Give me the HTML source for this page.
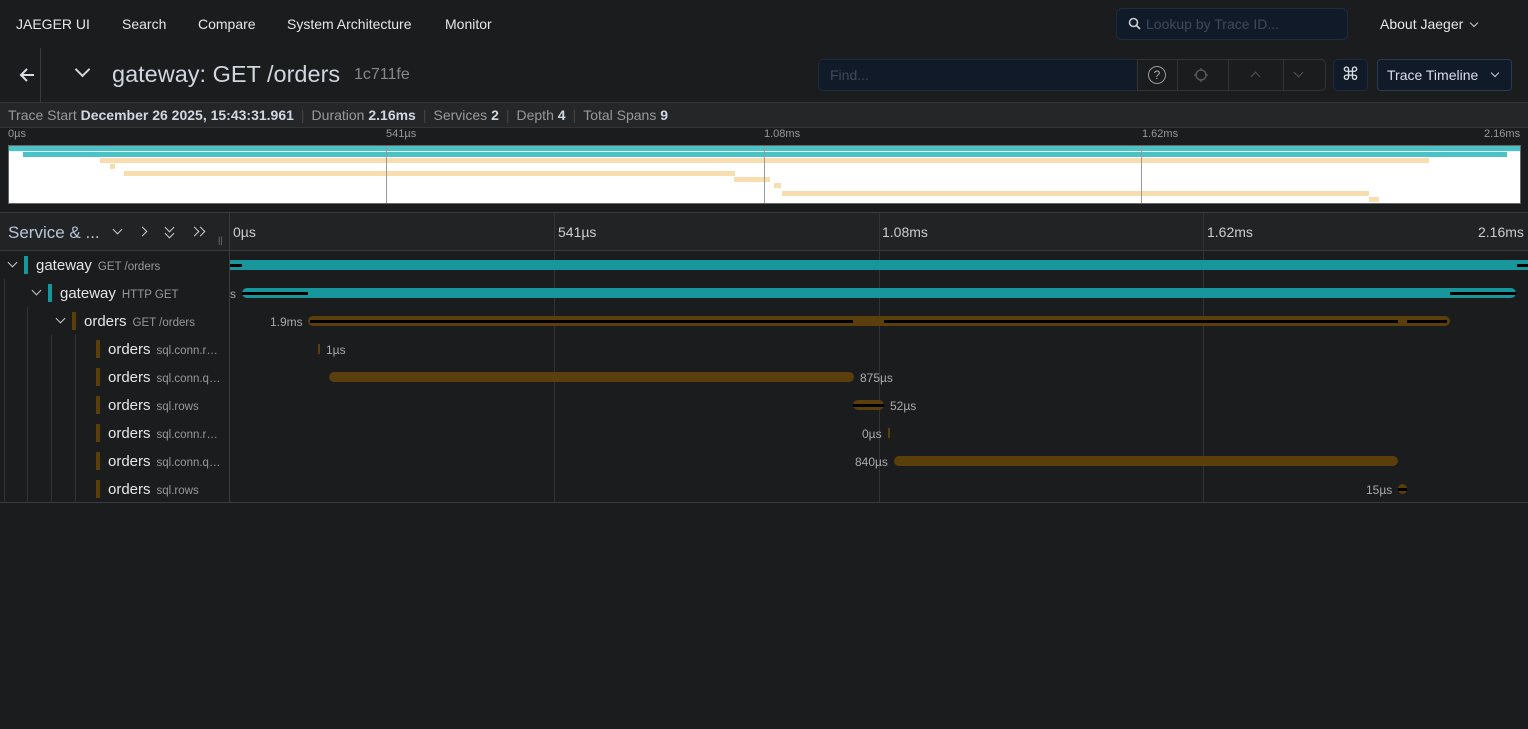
<!DOCTYPE html>
<html><head><meta charset="utf-8"><style>
*{box-sizing:border-box;margin:0;padding:0}
body{width:1528px;height:729px;background:#1b1c1e;font-family:"Liberation Sans",sans-serif;color:#d8dde3;position:relative;overflow:hidden}
.a{position:absolute;white-space:nowrap}
.nav{font-size:14px;top:16px;color:#e6e6e6}
.vl{position:absolute;width:1px;background:#3a3b3e}
.bar{position:absolute;height:10px}
.t{background:#17969c}.b{background:#5a3e0b}
.blk{position:absolute;height:3px;background:#000}
.lab{position:absolute;font-size:11px;color:#aaa}
.row .n{font-size:15px;color:#e4e6ea}
.row .o{font-size:11.5px;color:#999;margin-left:6px}
.cb{position:absolute;width:4px;height:18px}
.chev{position:absolute;width:7px;height:7px;border-right:1.6px solid #ccc;border-bottom:1.6px solid #ccc;transform:rotate(45deg)}
.mm{position:absolute}
.sep{color:#444;margin:0 7px}
</style></head><body>
<!-- nav -->
<div class="a nav" style="left:16px">JAEGER UI</div>
<div class="a nav" style="left:122px">Search</div>
<div class="a nav" style="left:198px">Compare</div>
<div class="a nav" style="left:287px">System Architecture</div>
<div class="a nav" style="left:445px">Monitor</div>
<div class="a" style="left:1116px;top:8px;width:232px;height:32px;background:#111a28;border:1px solid #1f2c3f;border-radius:6px"></div>
<svg class="a" style="left:1128px;top:17px" width="13" height="13" viewBox="0 0 13 13"><circle cx="5.5" cy="5.5" r="4" fill="none" stroke="#ccc" stroke-width="1.6"/><path d="M8.5 8.5L12 12" stroke="#ccc" stroke-width="1.8"/></svg>
<div class="a" style="left:1146px;top:16px;font-size:14px;color:#3d4a5c">Lookup by Trace ID...</div>
<div class="a nav" style="left:1380px">About Jaeger</div>
<div class="chev" style="left:1471px;top:20px;width:6px;height:6px"></div>
<!-- trace header -->
<svg class="a" style="left:18px;top:66px" width="18" height="18" viewBox="0 0 18 18"><path d="M16 9H3M9 3L3 9l6 6" fill="none" stroke="#d8dde3" stroke-width="2"/></svg>
<div class="vl" style="left:40px;top:48px;height:54px"></div>
<div class="chev" style="left:77px;top:64px;width:11px;height:11px;border-width:2.4px;border-color:#cfd6df"></div>
<div class="a" style="left:112px;top:61px;font-size:23.5px;color:#cfd6df">gateway: GET /orders</div>
<div class="a" style="left:354px;top:66px;font-size:16px;color:#888">1c711fe</div>
<div class="a" style="left:818px;top:59px;width:508px;height:32px;background:#111a28;border:1px solid #1f2c3f;border-radius:5px"></div>
<div class="a" style="left:830px;top:67px;font-size:14px;color:#3d4a5c">Find...</div>
<div class="a" style="left:1137px;top:59px;width:189px;height:32px;background:#1b1c1e;border:1px solid #333;border-radius:0 5px 5px 0"></div>
<div class="vl" style="left:1177px;top:59px;height:32px;background:#333"></div>
<div class="vl" style="left:1228px;top:59px;height:32px;background:#333"></div>
<div class="vl" style="left:1283px;top:59px;height:32px;background:#333"></div>
<div class="a" style="left:1148px;top:66px;width:18px;height:18px;border:1px solid #999;border-radius:50%;font-size:12px;color:#aaa;text-align:center;line-height:16px">?</div>
<svg class="a" style="left:1193px;top:67px" width="16" height="16" viewBox="0 0 16 16"><circle cx="8" cy="8" r="5" fill="none" stroke="#555" stroke-width="1.5"/><path d="M8 1v3M8 12v3M1 8h3M12 8h3" stroke="#555" stroke-width="1.5"/></svg>
<div class="chev" style="left:1252px;top:73px;transform:rotate(225deg);border-color:#555"></div>
<div class="chev" style="left:1295px;top:69px;border-color:#555"></div>
<div class="a" style="left:1333px;top:59px;width:35px;height:32px;background:#111a28;border:1px solid #1f2c3f;border-radius:5px;text-align:center;font-size:18px;line-height:29px;color:#d8dde3">⌘</div>
<div class="a" style="left:1377px;top:59px;width:135px;height:32px;background:#111a28;border:1px solid #2a3a50;border-radius:4px"></div>
<div class="a" style="left:1387px;top:67px;font-size:14px;color:#dde">Trace Timeline</div>
<div class="chev" style="left:1492px;top:70px;width:6px;height:6px"></div>
<!-- summary -->
<div class="a" style="left:0;top:102px;width:1528px;height:25px;background:#252628;border-top:1px solid #333"></div>
<div class="a" style="left:8px;top:107px;font-size:14px;color:#999">Trace Start <b style="color:#d0d8e2">December 26 2025, 15:43:31.961</b><span class="sep">|</span>Duration <b style="color:#d0d8e2">2.16ms</b><span class="sep">|</span>Services <b style="color:#d0d8e2">2</b><span class="sep">|</span>Depth <b style="color:#d0d8e2">4</b><span class="sep">|</span>Total Spans <b style="color:#d0d8e2">9</b></div>
<!-- minimap -->
<div class="a" style="left:0;top:127px;width:1528px;height:86px;background:#1b1c1e;border-top:1px solid #333"></div>
<div class="lab" style="left:8px;top:128px;color:#999">0µs</div>
<div class="lab" style="left:386px;top:128px;color:#999">541µs</div>
<div class="lab" style="left:764px;top:128px;color:#999">1.08ms</div>
<div class="lab" style="left:1142px;top:128px;color:#999">1.62ms</div>
<div class="lab" style="left:1484px;top:128px;color:#999">2.16ms</div>
<div class="a" style="left:8px;top:145px;width:1513px;height:59px;background:#fff;border:1px solid #666"></div>
<div class="mm" style="left:9px;top:146px;width:1511px;height:5px;background:#4cc1c6"></div>
<div class="mm" style="left:9px;top:151px;width:1511px;height:1px;background:#dff"></div>
<div class="mm" style="left:23px;top:152px;width:1484px;height:5px;background:#4cc1c6"></div>
<div class="mm" style="left:100px;top:158px;width:1329px;height:5px;background:#f8deaf"></div>
<div class="mm" style="left:110px;top:164px;width:5px;height:5px;background:#f8deaf"></div>
<div class="mm" style="left:124px;top:171px;width:611px;height:5px;background:#f8deaf"></div>
<div class="mm" style="left:734px;top:177px;width:36px;height:5px;background:#f8deaf"></div>
<div class="mm" style="left:774px;top:183px;width:7px;height:5px;background:#f8deaf"></div>
<div class="mm" style="left:782px;top:191px;width:587px;height:5px;background:#f8deaf"></div>
<div class="mm" style="left:1369px;top:197px;width:10px;height:5px;background:#f8deaf"></div>
<div class="vl" style="left:386px;top:146px;height:57px;background:#999"></div>
<div class="vl" style="left:764px;top:146px;height:57px;background:#999"></div>
<div class="vl" style="left:1141px;top:146px;height:57px;background:#999"></div>
<!-- timeline header -->
<div class="a" style="left:0;top:212px;width:1528px;height:39px;background:#222325;border-top:1px solid #3a3b3e;border-bottom:1px solid #3a3b3e"></div>
<div class="a" style="left:8px;top:223px;font-size:17px;color:#b8c6d8">Service &amp; ...</div>
<div class="chev" style="left:114px;top:226px"></div>
<div class="chev" style="left:139px;top:228px;transform:rotate(-45deg)"></div>
<div class="chev" style="left:166px;top:224px"></div><div class="chev" style="left:166px;top:230px"></div>
<div class="chev" style="left:191px;top:228px;transform:rotate(-45deg)"></div><div class="chev" style="left:197px;top:228px;transform:rotate(-45deg)"></div>
<div class="a" style="left:218px;top:235px;font-size:9px;color:#777">||</div>
<div class="vl" style="left:229px;top:213px;height:290px"></div>
<div class="a" style="left:233px;top:224px;font-size:14px;color:#ccc">0µs</div>
<div class="a" style="left:558px;top:224px;font-size:14px;color:#ccc">541µs</div>
<div class="a" style="left:882px;top:224px;font-size:14px;color:#ccc">1.08ms</div>
<div class="a" style="left:1207px;top:224px;font-size:14px;color:#ccc">1.62ms</div>
<div class="a" style="left:1478px;top:224px;font-size:14px;color:#ccc">2.16ms</div>
<div class="vl" style="left:554px;top:213px;height:290px;background:#333"></div>
<div class="vl" style="left:879px;top:213px;height:290px;background:#333"></div>
<div class="vl" style="left:1203px;top:213px;height:290px;background:#333"></div>
<div class="a" style="left:0;top:502px;width:1528px;height:1px;background:#3a3b3e"></div>
<!-- guides -->
<div class="vl" style="left:4px;top:279px;height:224px;background:#333"></div>
<div class="vl" style="left:27px;top:307px;height:196px;background:#333"></div>
<div class="vl" style="left:51px;top:335px;height:168px;background:#333"></div>
<div class="vl" style="left:75px;top:335px;height:168px;background:#333"></div>
<!-- rows -->
<div class="chev" style="left:9px;top:259px"></div>
<div class="cb t" style="left:24px;top:256px"></div>
<div class="a row" style="left:36px;top:257px"><span class="n">gateway</span><span class="o">GET /orders</span></div>
<div class="chev" style="left:33px;top:287px"></div>
<div class="cb t" style="left:48px;top:284px"></div>
<div class="a row" style="left:60px;top:285px"><span class="n">gateway</span><span class="o">HTTP GET</span></div>
<div class="chev" style="left:57px;top:315px"></div>
<div class="cb b" style="left:72px;top:312px"></div>
<div class="a row" style="left:84px;top:313px"><span class="n">orders</span><span class="o">GET /orders</span></div>
<div class="cb b" style="left:96px;top:340px"></div><div class="a row" style="left:108px;top:341px"><span class="n">orders</span><span class="o">sql.conn.r…</span></div>
<div class="cb b" style="left:96px;top:368px"></div><div class="a row" style="left:108px;top:369px"><span class="n">orders</span><span class="o">sql.conn.q…</span></div>
<div class="cb b" style="left:96px;top:396px"></div><div class="a row" style="left:108px;top:397px"><span class="n">orders</span><span class="o">sql.rows</span></div>
<div class="cb b" style="left:96px;top:424px"></div><div class="a row" style="left:108px;top:425px"><span class="n">orders</span><span class="o">sql.conn.r…</span></div>
<div class="cb b" style="left:96px;top:452px"></div><div class="a row" style="left:108px;top:453px"><span class="n">orders</span><span class="o">sql.conn.q…</span></div>
<div class="cb b" style="left:96px;top:480px"></div><div class="a row" style="left:108px;top:481px"><span class="n">orders</span><span class="o">sql.rows</span></div>
<!-- bars -->
<div class="bar t" style="left:230px;top:260px;width:1298px"></div>
<div class="blk" style="left:230px;top:264px;width:12px"></div><div class="blk" style="left:1517px;top:264px;width:11px"></div>
<div class="lab" style="left:230px;top:287px;font-size:12px">s</div>
<div class="bar t" style="left:242px;top:288px;width:1274px;border-radius:5px"></div>
<div class="blk" style="left:242px;top:292px;width:66px"></div><div class="blk" style="left:1450px;top:292px;width:66px"></div>
<div class="lab" style="left:270px;top:315px;font-size:12px">1.9ms</div>
<div class="bar b" style="left:308px;top:316px;width:1142px;border-radius:5px"></div>
<div class="blk" style="left:310px;top:320px;width:543px"></div><div class="blk" style="left:884px;top:320px;width:514px"></div><div class="blk" style="left:1407px;top:320px;width:40px"></div>
<div class="bar b" style="left:318px;top:344px;width:2px"></div>
<div class="lab" style="left:326px;top:343px;font-size:12px">1µs</div>
<div class="bar b" style="left:329px;top:372px;width:525px;border-radius:5px"></div>
<div class="lab" style="left:860px;top:371px;font-size:12px">875µs</div>
<div class="bar b" style="left:853px;top:400px;width:31px;border-radius:5px"></div><div class="blk" style="left:853px;top:404px;width:31px"></div>
<div class="lab" style="left:890px;top:399px;font-size:12px">52µs</div>
<div class="lab" style="left:862px;top:427px;font-size:12px">0µs</div>
<div class="bar b" style="left:888px;top:428px;width:2px"></div>
<div class="lab" style="left:855px;top:455px;font-size:12px">840µs</div>
<div class="bar b" style="left:894px;top:456px;width:504px;border-radius:5px"></div>
<div class="lab" style="left:1366px;top:483px;font-size:12px">15µs</div>
<div class="bar b" style="left:1398px;top:484px;width:9px;border-radius:5px"></div><div class="blk" style="left:1398px;top:488px;width:9px"></div>
</body></html>
